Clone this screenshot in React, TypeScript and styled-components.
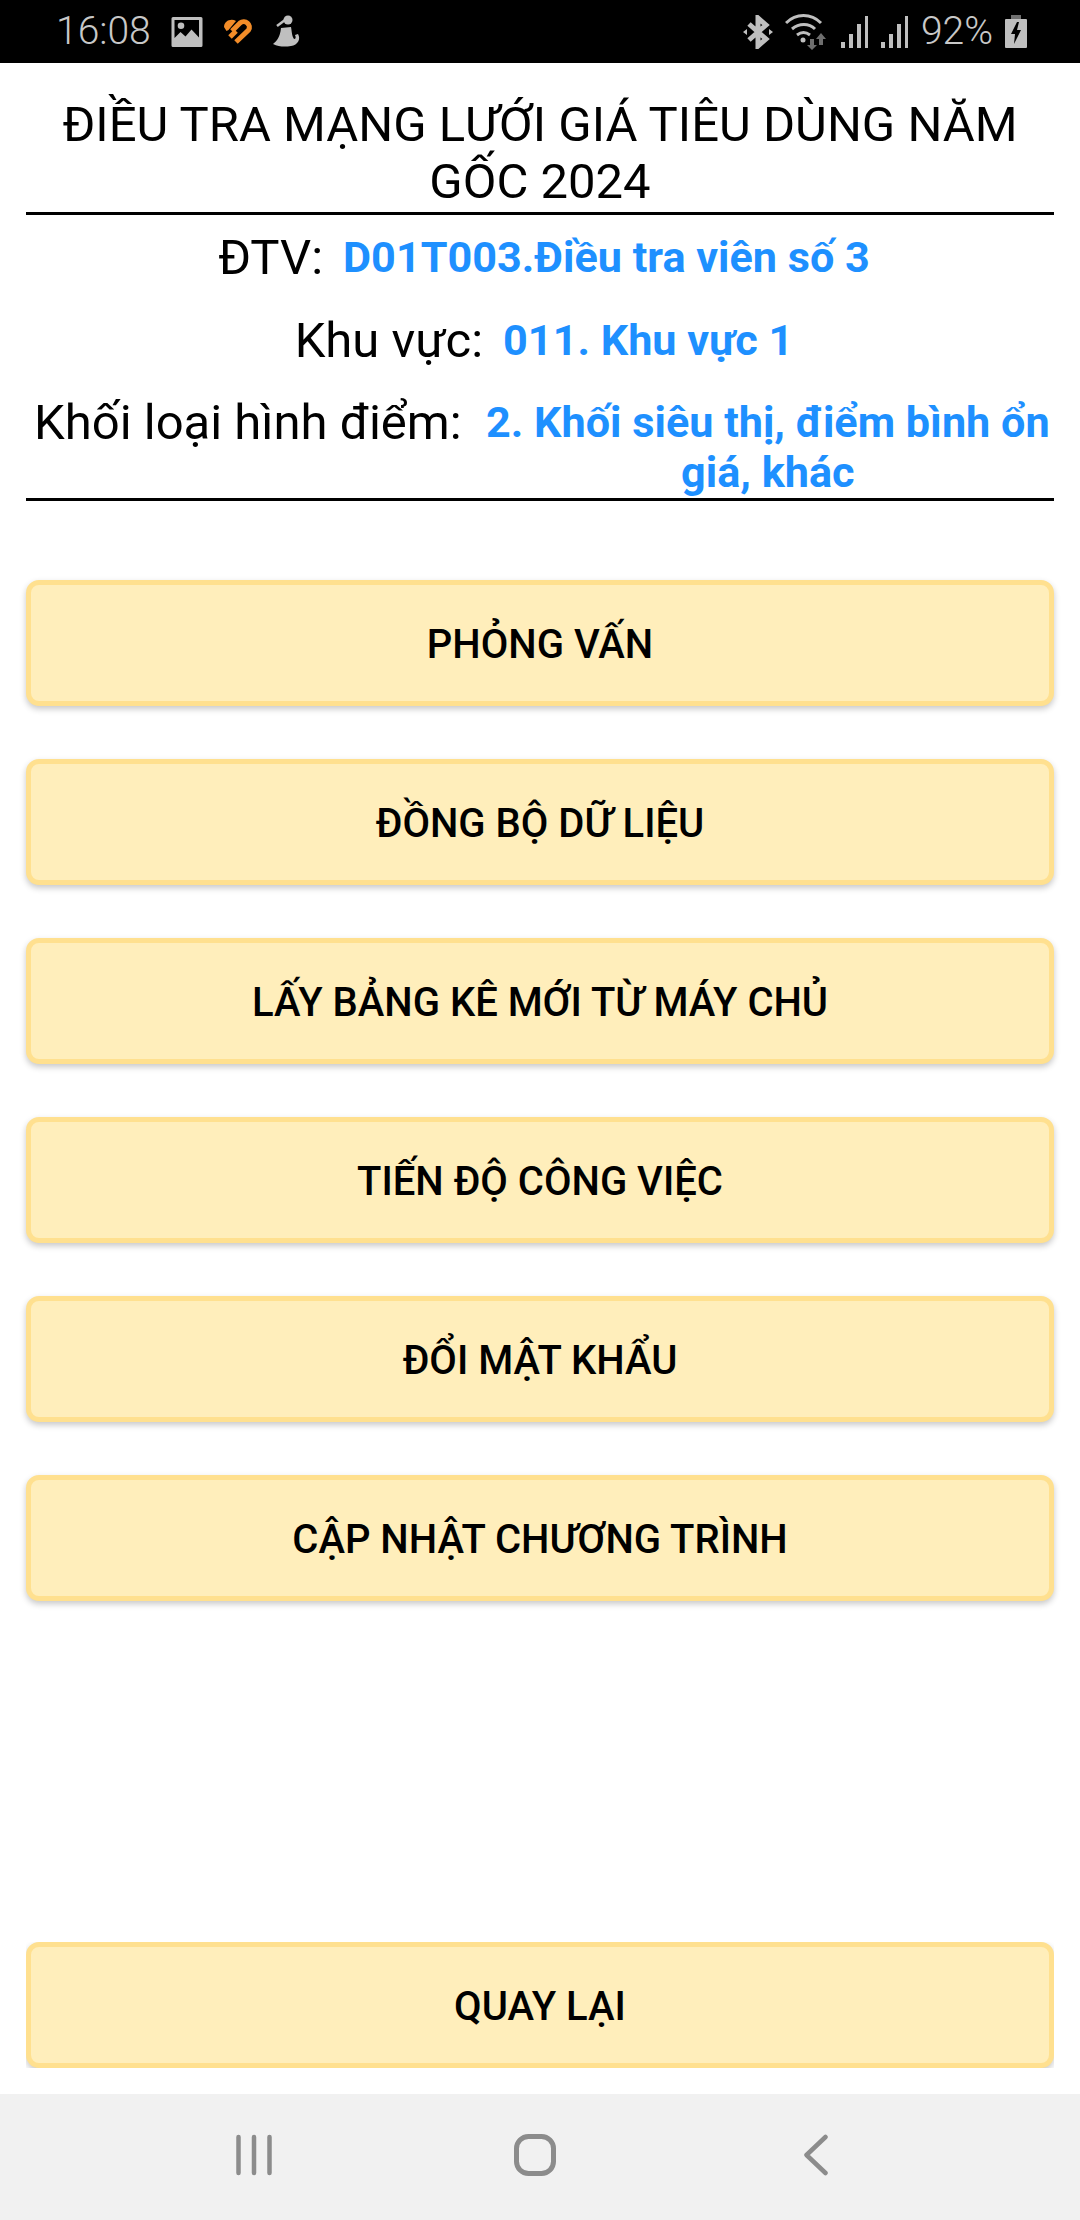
import { FC } from 'react';
import styled, { createGlobalStyle } from 'styled-components';

const GlobalStyle = createGlobalStyle`
  html, body {
    margin: 0;
    padding: 0;
    background: #fff;
  }
  * {
    box-sizing: border-box;
  }
`;

const Screen = styled.div`
  display: flex;
  flex-direction: column;
  width: 1080px;
  height: 2220px;
  overflow: hidden;
  background: #fff;
  font-family: Roboto, 'Noto Sans', sans-serif;
  color: #000;
`;

const StatusBar = styled.div`
  display: flex;
  align-items: center;
  justify-content: space-between;
  height: 63px;
  flex-shrink: 0;
  padding: 0 53px 0 56px;
  background: #000;
  color: #c8c8c8;
  font-size: 39px;
  font-weight: 300;
`;

const StatusGroup = styled.div`
  display: flex;
  align-items: center;
  gap: 20px;
`;

const StatusGroupRight = styled(StatusGroup)`
  gap: 12px;
`;

const StatusText = styled.span`
  line-height: 63px;
`;

const Header = styled.header`
  height: 152px;
  margin: 0 26px;
  padding-top: 33px;
  border-bottom: 3px solid #000;
`;

const Title = styled.h1`
  margin: 0;
  font-size: 49px;
  font-weight: 400;
  line-height: 57px;
  text-align: center;
`;

const Info = styled.section`
  display: flex;
  flex-direction: column;
  gap: 32.5px;
  height: 286px;
  margin: 0 26px;
  padding: 18px 0 0 8px;
  border-bottom: 3px solid #000;
`;

const InfoRow = styled.div`
  display: flex;
  align-items: flex-start;
  justify-content: center;
  gap: 20px;
`;

const InfoLabel = styled.span`
  flex-shrink: 0;
  font-size: 49px;
  line-height: 50px;
`;

const InfoValue = styled.span`
  color: #1e90ff;
  font-size: 43.2px;
  font-weight: 700;
  line-height: 50px;
  text-align: center;
`;

const Menu = styled.nav`
  display: flex;
  flex-direction: column;
  gap: 53px;
  margin: 79px 26px 0;
`;

const MenuButton = styled.button`
  width: 100%;
  height: 126px;
  flex-shrink: 0;
  padding: 3px 0 0;
  border: 5px solid #ffe08f;
  border-radius: 13px;
  background: #ffeebb;
  box-shadow: 0 3px 6px rgba(0, 0, 0, 0.22);
  color: #000;
  font-family: inherit;
  font-size: 40px;
  font-weight: 500;
`;

const BackClip = styled.div`
  height: 126px;
  margin: auto 26px 26px;
  overflow: hidden;
`;

const NavBar = styled.div`
  display: grid;
  grid-template-columns: repeat(3, 281px);
  justify-content: center;
  align-items: center;
  justify-items: center;
  height: 126px;
  flex-shrink: 0;
  padding: 0 10px 4px 0;
  background: #f1f1f1;
  color: #8c8c8c;
`;

const statusIconColor = '#bfbfbf';

const GalleryIcon: FC = () => (
  <svg width="32" height="32" viewBox="0 0 32 32">
    <path
      fill={statusIconColor}
      fillRule="evenodd"
      d="M2 1h28a1.500 1.500 0 0 1 1.500 1.500v27a1.500 1.500 0 0 1-1.500 1.500H2a1.500 1.500 0 0 1-1.500-1.500v-27A1.500 1.500 0 0 1 2 1zm1.500 3v18l6-6 5 4.500 6-7 7.500 8V4zM10 6.500a3.300 3.300 0 1 1 0 6.600 3.300 3.300 0 0 1 0-6.600z"
    />
  </svg>
);

const HeartIcon: FC = () => (
  <svg width="30" height="25" viewBox="0 0 30 25">
    <g fill="none" stroke="#f28c28" strokeWidth="5">
      <path d="M13 23 25.500 11C29 6 22 0 17 4L9 12" />
      <path d="M7 18 13 12" />
    </g>
    <path fill="#f28c28" d="M1 8C1 2 8-1 13 2L5.500 11 3.500 12z" />
  </svg>
);

const PersonIcon: FC = () => (
  <svg width="28" height="34" viewBox="0 0 28 34">
    <g fill={statusIconColor}>
      <circle cx="15" cy="5" r="4.500" />
      <path d="M8 13 18 12c1 6 1 9 3 12 2 0 2-2 1-4l3-1c3 5 0 11-7 12-6 1-12 1-18-2 4-3 7-7 8-16z" />
    </g>
    <path d="M4 11 12 5" stroke={statusIconColor} strokeWidth="2.500" />
  </svg>
);

const BluetoothIcon: FC = () => (
  <svg width="30" height="34" viewBox="0 0 30 34">
    <path
      fill="none"
      stroke={statusIconColor}
      strokeWidth="5"
      d="M6 9l17 15-8 7V3l8 7L6 25"
    />
    <path fill={statusIconColor} d="M0 17l4-3v6zM30 17l-4-3v6z" />
  </svg>
);

const WifiIcon: FC = () => (
  <svg width="44" height="36" viewBox="0 0 44 36">
    <g fill="none" stroke={statusIconColor} strokeWidth="3">
      <path d="M1 9c10-10 25-10 35 0" />
      <path d="M7 15c7-6 17-6 23 0" />
      <path d="M12 21c4-3 9-3 13 0" />
    </g>
    <circle cx="18" cy="26" r="2.500" fill={statusIconColor} />
    <path fill="#6e6e6e" d="M25 25h4v6h3l-5 5-5-5h3zM38 31h-4v-6h-3l5-6 5 6h-3z" />
  </svg>
);

const SignalIcon: FC = () => (
  <svg width="28" height="32" viewBox="0 0 28 32">
    <g fill={statusIconColor}>
      <rect x="0" y="26" width="4" height="6" />
      <rect x="8" y="18" width="4" height="14" />
      <rect x="16" y="8" width="4" height="24" />
      <rect x="24" y="0" width="3" height="32" />
    </g>
  </svg>
);

const BatteryIcon: FC = () => (
  <svg width="22" height="33" viewBox="0 0 22 33">
    <rect x="6" y="0" width="10" height="4" fill="#6f6f6f" />
    <path
      fill={statusIconColor}
      fillRule="evenodd"
      d="M1 4h20a1 1 0 0 1 1 1v27a1 1 0 0 1-1 1H1a1 1 0 0 1-1-1V5a1 1 0 0 1 1-1zm11 3L6 19h4l-1 10 7-14h-4l2-8z"
    />
  </svg>
);

const RecentsIcon: FC = () => (
  <svg width="36" height="42" viewBox="0 0 36 42">
    <g stroke="currentColor" strokeWidth="4.500" strokeLinecap="round">
      <path d="M2.500 3v36M18 3v36M33.500 3v36" />
    </g>
  </svg>
);

const HomeIcon: FC = () => (
  <svg width="42" height="42" viewBox="0 0 42 42">
    <rect
      x="2.500"
      y="2.500"
      width="37"
      height="37"
      rx="12"
      fill="none"
      stroke="currentColor"
      strokeWidth="5"
    />
  </svg>
);

const BackIcon: FC = () => (
  <svg width="24" height="42" viewBox="0 0 24 42">
    <path
      d="M21.500 3 2.500 21l19 18"
      fill="none"
      stroke="currentColor"
      strokeWidth="4.500"
      strokeLinecap="round"
      strokeLinejoin="round"
    />
  </svg>
);

const menuItems = [
  'PHỎNG VẤN',
  'ĐỒNG BỘ DỮ LIỆU',
  'LẤY BẢNG KÊ MỚI TỪ MÁY CHỦ',
  'TIẾN ĐỘ CÔNG VIỆC',
  'ĐỔI MẬT KHẨU',
  'CẬP NHẬT CHƯƠNG TRÌNH',
];

const infoRows = [
  { label: 'ĐTV:', value: 'D01T003.Điều tra viên số 3' },
  { label: 'Khu vực:', value: '011. Khu vực 1' },
  { label: 'Khối loại hình điểm:', value: '2. Khối siêu thị, điểm bình ổn giá, khác' },
];

const App: FC = () => {
  return (
    <Screen>
      <GlobalStyle />
      <StatusBar>
        <StatusGroup>
          <StatusText>16:08</StatusText>
          <GalleryIcon />
          <HeartIcon />
          <PersonIcon />
        </StatusGroup>
        <StatusGroupRight>
          <BluetoothIcon />
          <WifiIcon />
          <SignalIcon />
          <SignalIcon />
          <StatusText>92%</StatusText>
          <BatteryIcon />
        </StatusGroupRight>
      </StatusBar>
      <Header>
        <Title>ĐIỀU TRA MẠNG LƯỚI GIÁ TIÊU DÙNG NĂM GỐC 2024</Title>
      </Header>
      <Info>
        {infoRows.map((row) => (
          <InfoRow key={row.label}>
            <InfoLabel>{row.label}</InfoLabel>
            <InfoValue>{row.value}</InfoValue>
          </InfoRow>
        ))}
      </Info>
      <Menu>
        {menuItems.map((item) => (
          <MenuButton key={item}>{item}</MenuButton>
        ))}
      </Menu>
      <BackClip>
        <MenuButton>QUAY LẠI</MenuButton>
      </BackClip>
      <NavBar>
        <RecentsIcon />
        <HomeIcon />
        <BackIcon />
      </NavBar>
    </Screen>
  );
};

export default App;
